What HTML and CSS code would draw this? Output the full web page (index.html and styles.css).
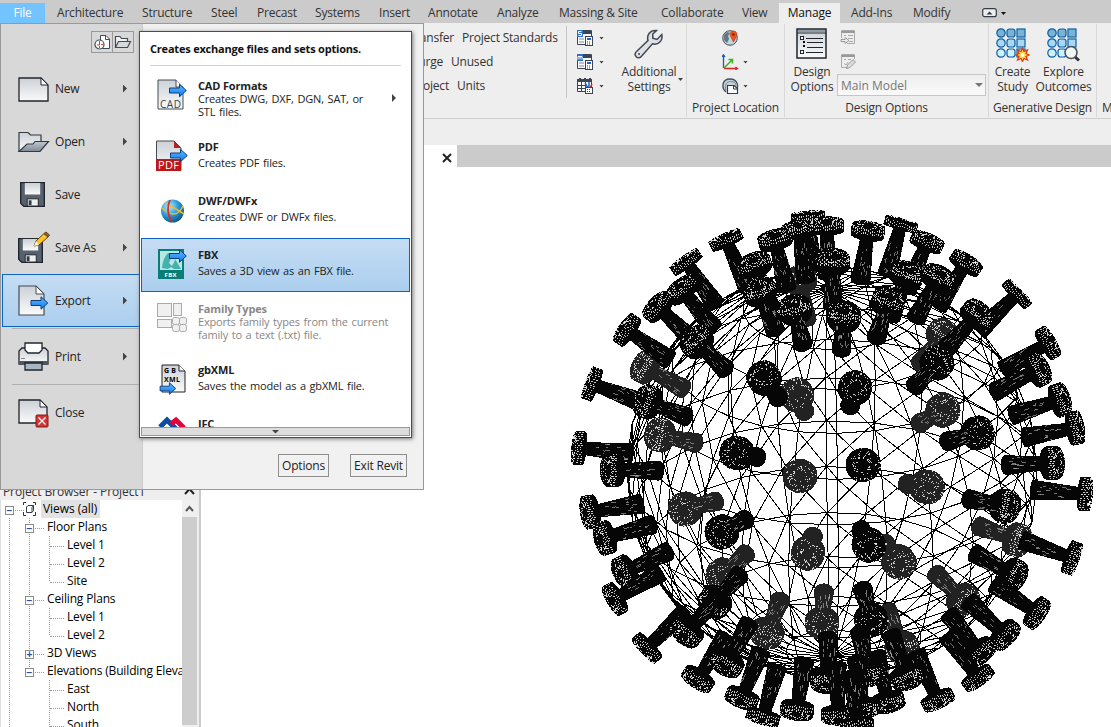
FILE: index.html
```html
<!DOCTYPE html>
<html lang="en">
<head>
<meta charset="utf-8">
<title>Revit</title>
<link rel="stylesheet" href="styles.css">
</head>
<body>
<svg width="0" height="0" class="defs">
  <defs>
    <linearGradient id="paper" x1="0" y1="0" x2="0" y2="1"><stop offset="0" stop-color="#ccd1d7"/><stop offset="1" stop-color="#fafafa"/></linearGradient>
    <linearGradient id="blue" x1="0" y1="0" x2="0" y2="1"><stop offset="0" stop-color="#65b8ff"/><stop offset="1" stop-color="#0a7cf0"/></linearGradient>
    <linearGradient id="steel" x1="0" y1="0" x2="0" y2="1"><stop offset="0" stop-color="#c3c9cf"/><stop offset="1" stop-color="#7e8a96"/></linearGradient>
    <radialGradient id="globe" cx=".35" cy=".3" r=".8"><stop offset="0" stop-color="#b8ecff"/><stop offset=".5" stop-color="#2a9bd8"/><stop offset="1" stop-color="#064a80"/></radialGradient>
    <symbol id="arrow" viewBox="0 0 18 14"><path d="M.5 4.500H10.500V.8L17.300 7L10.500 13.200V9.500H.5Z" fill="url(#blue)" stroke="#0a3f7c"/></symbol>
    <symbol id="floppy" viewBox="0 0 26 26"><path d="M.7.7H25.300V25.300H4L.7 22Z" fill="#58616e" stroke="#20242c" stroke-width="1.400"/><path d="M5 1H21V13H5Z" fill="url(#paper)"/><path d="M7.500 17.500H19V25H7.500Z" fill="#eee" stroke="#20242c"/><path d="M9 19H12V24H9Z" fill="#333944"/></symbol>
    <symbol id="grid9" viewBox="0 0 32 32"><g fill="#7bb3d2" stroke="#0c5fa8" stroke-width="1.200"><circle cx="5" cy="5" r="4.200"/><rect x="11" y="1" width="8" height="8" rx="2.500"/><rect x="21" y="1" width="8" height="8"/></g><g fill="#a9d9ee" stroke="#0c5fa8" stroke-width="1.200"><circle cx="5" cy="15" r="4.200"/><rect x="11" y="11" width="8" height="8" rx="2.500"/><rect x="21" y="11" width="8" height="8"/></g><g fill="#cdf1ff" stroke="#0c5fa8" stroke-width="1.200"><circle cx="5" cy="25" r="4.200"/><rect x="11" y="21" width="8" height="8" rx="2.500"/><rect x="21" y="21" width="8" height="8"/></g></symbol>
    <symbol id="schedule" viewBox="0 0 16 16"><path d="M3 .5H14.500V14.500H.5V7" fill="#f7f8fa" stroke="#3b4452"/><path d="M5 1H14V4H5Z" fill="#3b4452"/><path d="M2 9H7M2 12H7" stroke="#889"/><rect x="8.500" y="6.500" width="7" height="9" fill="#fff" stroke="#3b4452"/><path d="M10 8H14V10H10Z" fill="#1e62c8"/><path d="M10 12H14M10 14H14" stroke="#3b4452" stroke-dasharray="1 1"/><rect width="6" height="7" fill="#2e6fc9"/></symbol>
  </defs>
</svg>
<div class="app">
  <nav class="tabs">
    <span class="tab file">File</span><span class="tab">Architecture</span><span class="tab">Structure</span><span class="tab">Steel</span><span class="tab">Precast</span><span class="tab">Systems</span><span class="tab">Insert</span><span class="tab">Annotate</span><span class="tab">Analyze</span><span class="tab">Massing &amp; Site</span><span class="tab">Collaborate</span><span class="tab">View</span><span class="tab active">Manage</span><span class="tab">Add-Ins</span><span class="tab">Modify</span>
    <svg class="collapse" width="26" height="12" viewBox="0 0 26 12"><rect x=".7" y="1.700" width="13.600" height="8" rx="2" fill="#eee" stroke="#333b48" stroke-width="1.200"/><path d="M4.500 7.500L7.500 4.500L10.500 7.500Z" fill="#333b48"/><path d="M19 5H24L21.500 8Z" fill="#111"/></svg>
  </nav>

  <section class="ribbon">
    <div class="group settings">
      <div class="lines">
        <p><span>Transfer</span>Project Standards</p>
        <p class="w2"><span>Purge</span>Unused</p>
        <p class="w3"><span>Project</span>Units</p>
      </div>
      <div class="stack">
        <p><svg width="16" height="16"><use href="#schedule"/><path d="M4.500 1.500H1.500V3.500H4.500V5.500H1.500" fill="none" stroke="#fff"/></svg><i class="dd"></i></p>
        <p><svg width="16" height="16"><use href="#schedule"/><path d="M1 5.500V2.500H5V5.500M3 2.500V5.500" fill="none" stroke="#fff"/></svg><i class="dd"></i></p>
        <p><svg width="16" height="16"><path d="M.5 1.500H14.500V13.500H.5Z" fill="#f7f8fa" stroke="#3b4452"/><path d="M0 1H15V4H0ZM2 0H4V2H2ZM7 0H9V2H7ZM12 0H14V2H12Z" fill="#3b4452"/><path d="M1 7.500H9M1 10.500H9M4.500 4V13M8.500 4V13" stroke="#3b4452"/><path d="M8 5L11 10M12 4V9" stroke="#1e62c8" stroke-width="1.500"/><path d="M15 6L13 10" stroke="#d22" stroke-width="1.500"/><rect x="8.500" y="9.500" width="7" height="6" fill="#fff" stroke="#3b4452"/><path d="M10 11.500H14M10 13.500H14" stroke="#3b4452" stroke-dasharray="1 1"/></svg><i class="dd"></i></p>
      </div>
      <div class="big additional">
        <svg width="32" height="32" viewBox="0 0 32 32"><path d="M3.200 28.800C1.500 27 1.800 25 3.500 23.500L15 12.500C13.500 7 17 1.800 23.500 2.500L19.800 6V10.200L24 11.500L28.800 6.500C30 12.500 25.500 17.500 19.500 15.800L8.500 28.200C7 30 5 30.500 3.200 28.800Z" fill="#dde0e4" stroke="#414853" stroke-width="1.500"/><circle cx="6" cy="26" r="1" fill="#414853"/></svg>
        <b>Additional<br>Settings</b><i class="dd"></i>
      </div>
    </div>
    <div class="group location">
      <div class="stack">
        <p><svg width="17" height="16"><circle cx="8" cy="8" r="7.300" fill="#c5d3dc" stroke="#454e5a"/><path d="M2 5L5 2L8 3L6 6L7 9L5 13L2 10Z" fill="#617783"/><path d="M11.500 12L8.500 6C7.500 3 9 1 11.500 1S15.500 3 14.500 6Z" fill="#f0531c" stroke="#b8300a" stroke-width=".6"/><circle cx="11.500" cy="4.500" r="1.300" fill="#8c1e00"/></svg></p>
        <p><svg width="17" height="16"><path d="M1.500 14V1M0 3L1.500 .8L3 3" fill="none" stroke="#1a5da8" stroke-width="1.300"/><path d="M2 14.500H15M13.500 13L15.500 14.500L13.500 16" fill="none" stroke="#e02222" stroke-width="1.300"/><path d="M2 14L10 6M6.500 5.500H10.500V9.500" fill="none" stroke="#3bb321" stroke-width="1.500"/></svg><i class="dd"></i></p>
        <p><svg width="17" height="16"><path d="M4 14C-1 10 0 1 8 1S17 9 14 12" fill="#c5d3dc" stroke="#454e5a" stroke-width="1.300"/><path d="M4 12C2 7 5 3.500 8.500 3.500S14 5 14 8" fill="none" stroke="#7d8a94"/><path d="M5.500 15.500V7.500H12L15.500 10.500V15.500Z" fill="#fff" stroke="#333b48" stroke-width="1.200"/><path d="M11.500 8V11H15" fill="none" stroke="#333b48"/></svg><i class="dd"></i></p>
      </div>
      <h3>Project Location</h3>
    </div>
    <div class="group design">
      <div class="row">
        <div class="big">
          <svg width="32" height="32" viewBox="0 0 32 32"><rect x="1" y="1" width="29" height="29" fill="url(#paper)" stroke="#20242c" stroke-width="1.500"/><path d="M2 2H29V4H2Z" fill="#939ba5"/><path d="M1 5H30" stroke="#20242c"/><g fill="#fff" stroke="#20242c"><rect x="4.500" y="8.500" width="3" height="3"/><rect x="4.500" y="22.500" width="3" height="3"/></g><path d="M7 13H9V15H7ZM7 17H9V19H7Z"/><path d="M10 10.500H27M11 14.500H27M11 19.500H27M10 24.500H27" stroke="#20242c" stroke-width="1.200"/></svg>
          <b>Design<br>Options</b>
        </div>
        <div class="design-right">
          <svg width="16" height="16"><path d="M1.500 9V1.500H14.500V14.500H7" fill="none" stroke="#a9a9a9"/><path d="M1.500 3H14.500" stroke="#999" stroke-width="2"/><path d="M4 6.500H6M8 6.500H13M8 9.500H13M9 12.500H13" stroke="#aaa"/><path d="M1 10.500H5V8.500L9 11.500L5 14.500V12.500H1Z" fill="#eee" stroke="#999"/></svg>
          <svg width="16" height="16"><path d="M8 14.500H1.500V1.500H14.500V6" fill="none" stroke="#a9a9a9"/><path d="M1.500 3H14.500" stroke="#999" stroke-width="2"/><path d="M4 6.500H6M8 6.500H11M4 10.500L6 12L8 9" fill="none" stroke="#aaa"/><path d="M6.500 15.500L7.500 12L13 6.500L15.500 9L10 14.500Z" fill="#ddd" stroke="#999"/></svg>
          <div class="combo">Main Model<i class="dd"></i></div>
        </div>
      </div>
      <h3>Design Options</h3>
    </div>
    <div class="group generative">
      <div class="row">
        <div class="big"><svg width="34" height="34" viewBox="0 0 34 34"><use href="#grid9" width="32" height="32"/><path d="M26.500 20L28 23.500L31.500 22L30 25.500L33 27L30 28.500L31.500 32L28 30.500L26.500 33.500L25 30.500L21.500 32L23 28.500L20 27L23 25.500L21.500 22L25 23.500Z" fill="#ffd23c" stroke="#dd3a0c" stroke-width="1.200"/><circle cx="26.500" cy="27" r="2" fill="#fffbe0"/></svg><b>Create<br>Study</b></div>
        <div class="big"><svg width="34" height="34" viewBox="0 0 34 34"><use href="#grid9" width="32" height="32"/><path d="M27 28L32 32.500" stroke="#30333a" stroke-width="3"/><circle cx="24" cy="24.500" r="6" fill="#eef6f4" stroke="#4d5358" stroke-width="1.600"/></svg><b>Explore<br>Outcomes</b></div>
      </div>
      <h3>Generative Design</h3>
    </div>
    <div class="group last"><h3>M</h3></div>
  </section>

  <div class="optionbar"></div>

  <main class="work">
    <aside class="browser">
      <header>Project Browser - Project1<svg width="11" height="8"><path d="M1 7L5.500 2L10 7" fill="none" stroke="#222" stroke-width="2"/></svg></header>
      <div class="treewrap">
        <div class="tree">
          <div class="n root"><i class="c h"><s>−</s></i><svg width="15" height="16" viewBox="0 0 15 16"><path d="M4 1.500H1.500V4M1.500 11V14.500H4M11 1.500H13.500V4M13.500 11V14.500H11" fill="none" stroke="#333"/><path d="M4.500 6L6 4.500H11.500V9.500L10 11.500H4.500ZM10 11V6.500L11.500 4.500" fill="#fff" stroke="#333b48"/></svg><b>Views (all)</b></div>
          <div class="n"><i class="c v"></i><i class="c v h"><s>−</s></i><b>Floor Plans</b></div>
          <div class="n"><i class="c v"></i><i class="c v"></i><i class="c v h"></i><b>Level 1</b></div>
          <div class="n"><i class="c v"></i><i class="c v"></i><i class="c v h"></i><b>Level 2</b></div>
          <div class="n"><i class="c v"></i><i class="c v"></i><i class="c v h end"></i><b>Site</b></div>
          <div class="n"><i class="c v"></i><i class="c v h"><s>−</s></i><b>Ceiling Plans</b></div>
          <div class="n"><i class="c v"></i><i class="c v"></i><i class="c v h"></i><b>Level 1</b></div>
          <div class="n"><i class="c v"></i><i class="c v"></i><i class="c v h end"></i><b>Level 2</b></div>
          <div class="n"><i class="c v"></i><i class="c v h"><s>+</s></i><b>3D Views</b></div>
          <div class="n"><i class="c v"></i><i class="c v h end"><s>−</s></i><b>Elevations (Building Elevation)</b></div>
          <div class="n"><i class="c v"></i><i class="c"></i><i class="c v h"></i><b>East</b></div>
          <div class="n"><i class="c v"></i><i class="c"></i><i class="c v h"></i><b>North</b></div>
          <div class="n"><i class="c v"></i><i class="c"></i><i class="c v h"></i><b>South</b></div>
        </div>
        <div class="scroll"><svg width="15" height="17"><path d="M4 11L7.500 7L11 11" fill="none" stroke="#555" stroke-width="2"/></svg><div class="thumb"></div></div>
      </div>
    </aside>
    <div class="viewport">
      <div class="viewtabs"><div class="viewtab"><svg width="10" height="10"><path d="M1 1L9 9M9 1L1 9" stroke="#222" stroke-width="2"/></svg></div></div>
      <svg id="model" viewBox="200 167 911 560" shape-rendering="crispEdges"></svg>
    </div>
  </main>

  <div class="appmenu">
    <div class="left">
      <div class="quick">
        <span><svg width="17" height="17"><path d="M6.500 1.500H12L15.500 5V14.500H6.500Z" fill="#fff" stroke="#444b55"/><path d="M11.500 2V5.500H15" fill="none" stroke="#444b55"/><circle cx="5.500" cy="10.500" r="4.500" fill="#fff" stroke="#444b55" stroke-width="1.200"/><path d="M5.500 7V11H3M5.500 12V14M7 10.500H9" stroke="#d2421e" fill="none"/></svg></span><span><svg width="18" height="16"><path d="M1.500 13.500V2.500H6L7.500 4.500H13.500V7" fill="#f2f2f2" stroke="#444b55" stroke-width="1.200"/><path d="M1.500 13.500L4.500 7.500H16.500L13.500 13.500Z" fill="#d6dade" stroke="#444b55" stroke-width="1.200"/></svg></span>
      </div>
      <div class="mi"><svg width="32" height="28"><path d="M1 3H23L30 10V26H1Z" fill="url(#paper)" stroke="#20242c" stroke-width="1.300"/><path d="M23 3V10H30Z" fill="#fff" stroke="#20242c"/></svg><b>New</b><i class="ar"></i></div>
      <div class="mi"><svg width="32" height="28"><path d="M1 23V4.500H10L12.500 7H23V14" fill="url(#paper)" stroke="#333942" stroke-width="1.200"/><path d="M1 23.500L9 16H15L17 13.500H30.500L22 23.500Z" fill="url(#steel)" stroke="#333942" stroke-width="1.200"/></svg><b>Open</b><i class="ar"></i></div>
      <div class="mi"><svg width="32" height="28"><use href="#floppy" x="2" y="1" width="25" height="25"/></svg><b>Save</b></div>
      <div class="mi"><svg width="34" height="34"><use href="#floppy" x="0" y="7" width="25" height="25"/><path d="M16 15L18 10L26 2.500L30 6L21 14Z" fill="#f8c32c" stroke="#60431b"/><path d="M26 2.500L28 1L31.500 4L30 6Z" fill="#a95731" stroke="#60431b"/><path d="M16 15L18 10L21 14Z" fill="#fff3d0"/></svg><b>Save As</b><i class="ar"></i></div>
      <div class="mi sel"><svg width="32" height="32"><path d="M1 1H18L26 9V30H1Z" fill="url(#paper)" stroke="#444b55" stroke-width="1.200"/><path d="M18 1V9H26Z" fill="#fff" stroke="#444b55"/><use href="#arrow" x="12" y="11" width="19" height="14"/></svg><b>Export</b><i class="ar"></i></div>
      <hr>
      <div class="mi"><svg width="32" height="32"><path d="M1 10L4 7H27L30 10V23H1Z" fill="url(#paper)" stroke="#20242c" stroke-width="1.300"/><path d="M7 2H24V9L21 12H10L7 9Z" fill="#fff" stroke="#20242c" stroke-width="1.300"/><path d="M1 20H30V24H1Z" fill="#4d5663"/><path d="M7 22H24V29H7Z" fill="#a8b6c3" stroke="#20242c" stroke-width="1.300"/><path d="M3 17.500H7" stroke="#888"/></svg><b>Print</b><i class="ar"></i></div>
      <hr>
      <div class="mi"><svg width="32" height="32"><path d="M1 3H22L29 10V26H1Z" fill="url(#paper)" stroke="#20242c" stroke-width="1.300"/><path d="M22 3V10H29Z" fill="#fff" stroke="#20242c"/><rect x="18" y="18" width="12" height="12" rx="1" fill="#cf3737" stroke="#8c1717"/><path d="M20.500 20.500L27.500 27.500M27.500 20.500L20.500 27.500" stroke="#fff" stroke-width="1.200"/></svg><b>Close</b></div>
    </div>
    <div class="right"><button>Options</button><button>Exit Revit</button></div>
  </div>

  <div class="submenu">
    <h2>Creates exchange files and sets options.</h2>
    <div class="list">
      <div class="it tall"><svg width="32" height="32"><path d="M2 1H20L27 8V30H2Z" fill="url(#paper)" stroke="#444b55"/><path d="M20 1V8H27" fill="#fff" stroke="#444b55"/><use href="#arrow" x="13" y="4" width="18" height="15"/><text x="4" y="28.500" font-size="10" textLength="21" fill="#3a414c">CAD</text></svg><div><b>CAD Formats</b><p>Creates DWG, DXF, DGN, SAT, or<br>STL files.</p></div><i class="ar"></i></div>
      <div class="it"><svg width="32" height="32"><path d="M.5 1H18L25 8V30H.5Z" fill="url(#paper)" stroke="#444b55"/><path d="M18 1V8H25Z" fill="#b62020"/><path d="M0 19H25V31H0Z" fill="#bd1717"/><use href="#arrow" x="14" y="8" width="18" height="15"/><text x="2" y="29" font-size="11" textLength="21" fill="#fff">PDF</text></svg><div><b>PDF</b><p>Creates PDF files.</p></div></div>
      <div class="it"><svg width="32" height="32"><circle cx="16.500" cy="17" r="11.500" fill="url(#globe)"/><path d="M6 14Q20 27 27 12M9 9Q17 13 28 20" fill="none" stroke="#e7b93d" stroke-width="1.500"/><path d="M14 6Q9 17 16 28" fill="none" stroke="#dd2b1c" stroke-width="1.800"/></svg><div><b>DWF/DWFx</b><p>Creates DWF or DWFx files.</p></div></div>
      <div class="it sel"><svg width="32" height="32"><path d="M2 1H28V31H2Z" fill="#087e77"/><path d="M4 3H26V22H4Z" fill="#b9e7e5"/><path d="M6 20Q7 10 12 5H17L13 15L16 18Q19 14 19 11L25 21H18L15 19L12 21Z" fill="#45b1ac"/><use href="#arrow" x="13" y="1" width="18" height="14"/><text x="8.500" y="29" font-size="6" font-weight="700" textLength="12" fill="#fff">FBX</text></svg><div><b>FBX</b><p>Saves a 3D view as an FBX file.</p></div></div>
      <div class="it tall off"><svg width="32" height="32"><g fill="#f0f0f0" stroke="#aaa"><rect x="1.500" y="1.500" width="14" height="13"/><rect x="17.500" y="1.500" width="8" height="12"/><rect x="1.500" y="17.500" width="14" height="8"/><rect x="16.500" y="15.500" width="7" height="7" rx="2"/><rect x="23.500" y="15.500" width="7" height="7" rx="2"/><rect x="16.500" y="22.500" width="7" height="7" rx="2"/><rect x="23.500" y="22.500" width="7" height="7" rx="2"/></g></svg><div><b>Family Types</b><p>Exports family types from the current<br>family to a text (.txt) file.</p></div></div>
      <div class="it"><svg width="32" height="32"><path d="M6 2H23L29 8V29H6Z" fill="url(#paper)" stroke="#222"/><path d="M23 2V8H29" fill="#fff" stroke="#222"/><text x="8" y="10" font-size="7" textLength="12" font-weight="700" fill="#000">GB</text><text x="8" y="19" font-size="7" textLength="16" font-weight="700" fill="#000">XML</text><use href="#arrow" x="3" y="19" width="18" height="13"/></svg><div><b>gbXML</b><p>Saves the model as a gbXML file.</p></div></div>
      <div class="it"><svg width="32" height="32"><path d="M4 10L11 3L20 12" fill="none" stroke="#0b4ea0" stroke-width="5"/><path d="M15 7L20 3L28 11" fill="none" stroke="#e4003c" stroke-width="5"/></svg><div><b>IFC</b></div></div>
    </div>
    <div class="more"><i class="dd"></i></div>
  </div>
</div>
<script src="model.js"></script>
</body>
</html>
```
FILE: styles.css
```css
* { box-sizing: border-box; }
body { margin: 0; font: 12px "Open Sans", "Noto Sans", sans-serif; color: #333; letter-spacing: -0.2px; }
p, h2, h3 { margin: 0; font-weight: 400; font-size: 12px; }
b { font-weight: 400; }
svg { display: block; flex: none; }
svg text { letter-spacing: 0; }
.defs { position: absolute; }
.app { position: relative; width: 1111px; height: 727px; overflow: hidden; background: #fff; display: flex; flex-direction: column; }
.tabs { height: 23px; flex: none; padding-top: 3px; background: #cbcbcb; display: grid; grid-template-columns: 57px 85px 69px 46px 58px 64px 49px 69px 62px 102px 81px 37px 72px 62px 69px 30px; line-height: 20px; white-space: nowrap; }
.tab.file { width: 45px; background: #72c3ff; color: #fff; text-align: center; }
.tab.active { width: 61px; background: #eee; color: #111; text-align: center; }
.collapse { margin-top: 4px; }
.ribbon { height: 96px; flex: none; background: #eee; border-bottom: 1px solid #cfcfcf; display: flex; }
.group { border-right: 1px solid #d8d8d8; margin: 1px 0; display: flex; flex-direction: column; flex: none; }
.group h3 { text-align: center; line-height: 16px; margin-top: auto; padding-bottom: 1px; white-space: nowrap; }
.dd { width: 5px; height: 3px; background: #444; clip-path: polygon(0 0, 100% 0, 50% 100%); flex: none; }
.settings { width: 687px; padding-left: 400px; flex-direction: row; }
.lines { width: 167px; height: 72px; margin-top: 2px; border-right: 1px solid #c4c4c4; }
.lines p { display: flex; gap: 8px; height: 24px; line-height: 24px; white-space: nowrap; }
.lines span { width: 54px; display: flex; justify-content: flex-end; }
.lines .w2 span { width: 43px; }
.lines .w3 span { width: 49px; }
.stack { padding-top: 2px; }
.stack p { display: flex; align-items: center; gap: 6px; height: 24px; }
.settings .stack { padding-left: 10px; width: 53px; }
.big { display: flex; flex-direction: column; align-items: center; text-align: center; line-height: 15px; }
.big b { margin-top: 3px; }
.additional { width: 58px; padding-top: 4px; position: relative; }
.additional b { margin-top: 4px; }
.additional .dd { position: absolute; right: -5px; top: 54px; }
.location { width: 98px; }
.location .stack { padding-left: 35px; }
.location .dd { margin-left: -2px; }
.design { width: 204px; }
.row { display: flex; }
.design .big { width: 52px; padding: 4px 0 0 2px; }
.design .big b, .generative .big b { margin-top: 4px; }
.design-right { display: grid; gap: 8px; padding: 5px 0 0 3px; }
.design-right > .combo { margin: -3px 0 0 -3px; }
.combo { width: 149px; height: 22px; border: 1px solid #c6c6c6; background: linear-gradient(#eee, #fafafa); color: #777; display: flex; align-items: center; justify-content: space-between; padding: 0 2px 0 3px; letter-spacing: 0; }
.combo .dd { width: 8px; height: 4px; background: #777; }
.generative { width: 108px; }
.generative .big { padding-top: 4px; }
.generative .big b { margin-top: 2px; }
.generative .big:nth-child(1) { width: 47px; }
.generative .big:nth-child(2) { width: 55px; }
.last { border: 0; padding-left: 5px; }
.optionbar { height: 26px; flex: none; background: #eee; }
.work { flex: 1; display: flex; min-height: 0; }
.browser { width: 201px; height: 245px; align-self: flex-end; background: #eee; border-right: 2px solid #cacaca; }
.browser header { height: 18px; line-height: 17px; padding: 0 4px 0 3px; display: flex; align-items: center; justify-content: space-between; letter-spacing: -0.1px; }
.treewrap { display: flex; height: 227px; padding-right: 2px; }
.tree { width: 182px; background: #fff; overflow: hidden; border-left: 1px solid #ddd; color: #000; letter-spacing: -0.15px; }
.n { display: flex; height: 18px; line-height: 17px; white-space: nowrap; }
.n b { padding-left: 6px; }
.c { width: 20px; height: 18px; flex: none; position: relative; }
.c.v { background: repeating-linear-gradient(#999 0 1px, transparent 1px 2px) 8px 0 / 1px 100% no-repeat; }
.c.v.end { background-size: 1px 10px; }
.c.h::after { content: ""; display: block; margin: -9px 0 0 9px; width: 14px; border-top: 1px dotted #999; transform: translateY(19px); }
.c s { text-decoration: none; position: absolute; left: 4px; top: 6px; width: 9px; height: 9px; border: 1px solid #8b8b8b; background: #fff; color: #234fa8; font: 700 10px/7px "Liberation Sans", sans-serif; text-align: center; letter-spacing: 0; z-index: 1; }
.root svg { margin: 1px 0 0 1px; }
.root b { margin-left: 4px; padding: 0 3px 0 2px; background: #e2e2e2; letter-spacing: -0.05px; }
.scroll { width: 15px; background: #f0f0f0; }
.thumb { height: 208px; background: #cdcdcd; }
.viewport { flex: 1; display: flex; flex-direction: column; margin-left: -1px; }
.viewtabs { height: 22px; background: #cbcbcb; }
.viewtab { width: 257px; height: 22px; background: #fff; padding: 8px 0 0 242px; }
#model { width: 911px; height: 560px; }
.appmenu { position: absolute; left: 0; top: 23px; width: 424px; height: 467px; border: 1px solid #999; background: #f1f1f1; display: flex; color: #222; }
.left { width: 142px; background: #d8d8d8; border-right: 1px solid #ccc; }
.quick { display: flex; width: 43px; height: 22px; margin: 7px 0 9px 90px; border: 1px solid #999; }
.quick span { flex: 1; display: grid; place-items: center; }
.quick span + span { border-left: 1px solid #999; }
.mi { height: 53px; display: flex; align-items: center; padding-left: 16px; margin-left: 1px; width: 139px; }
.mi svg { width: 37px; overflow: visible; }
.mi.sel { border: 1px solid #0b64c0; background: linear-gradient(#c5dcf3, #abcfef); padding-left: 15px; }
.ar { width: 4px; height: 8px; background: #444; clip-path: polygon(0 0, 100% 50%, 0 100%); margin-left: auto; flex: none; }
.mi .ar { margin-right: 14px; }
.mi.sel .ar { margin-right: 13px; }
.left hr { border: 0; border-top: 1px solid #b0b0b0; margin: 1px 0 1px 11px; }
.right { flex: 1; display: flex; align-items: flex-end; justify-content: flex-end; gap: 21px; padding: 0 16px 12px 0; }
button { height: 23px; border: 1px solid #8e8e8e; background: #f1f1f1; font: inherit; letter-spacing: inherit; color: #222; padding: 0; width: 51px; white-space: nowrap; }
button + button { width: 57px; }
.submenu { position: absolute; left: 139px; top: 31px; width: 273px; height: 407px; border: 1px solid #0b5cb0; background: #fff; box-shadow: 1px 1px 4px #777; padding: 0 1px; color: #222; font-size: 11px; letter-spacing: -0.17px; }
.submenu h2 { font-size: 11px; font-weight: 700; line-height: 33px; margin: 0 9px 3px; border-bottom: 1px solid #d4d4d4; color: #111; height: 34px; white-space: nowrap; letter-spacing: -0.2px; }
.list { height: 358px; overflow: hidden; }
.it { height: 54px; display: flex; padding: 9px 12px 0 14px; border: 1px solid transparent; }
.it.tall { height: 61px; }
.it.sel { border-color: #0b64c0; background: linear-gradient(#c5dcf3, #abcfef); }
.it svg { margin-right: 10px; overflow: visible; }
.it b { display: block; font-weight: 700; line-height: 13px; }
.it p { font-size: 11px; line-height: 13px; padding-top: 3px; white-space: nowrap; word-spacing: 1px; }
.it.tall p { padding-top: 0; }
.it .ar { margin: 15px 1px 0 auto; }
.off { color: #888; }
.more { height: 9px; background: #ddd; border: 1px solid #999; display: grid; place-items: center; }
.more .dd { width: 8px; height: 4px; }
```
FILE: model.js
```js
// Wireframe sphere with spikes, drawn in an orthographic projection.
const svg = document.getElementById('model');
const CX = 832, CY = 473, R = 206, TILT = 0.48;
const out = [];
let seed = 7;
const rnd = () => (seed = (seed * 16807) % 2147483647) / 2147483647;
const f = n => n.toFixed(1);

function point(i, j, rings, segs) {
  const a = Math.PI * i / rings, b = 2 * Math.PI * j / segs + 0.03;
  const x = Math.sin(a) * Math.sin(b), y = Math.cos(a), z = Math.sin(a) * Math.cos(b);
  return f(CX + R * x) + ' ' + f(CY - R * (y * Math.cos(TILT) - z * Math.sin(TILT)));
}
let mesh = '';
const rings = 14, segs = 26;
for (let i = 0; i < rings; i++) {
  for (let j = 0; j < segs; j++) {
    const p = point(i, j, rings, segs), q = point(i + 1, j, rings, segs);
    mesh += 'M' + q + 'L' + p + 'L' + point(i + 1, j + 1, rings, segs) + 'L' + q;
  }
}
out.push(`<path d="${mesh}" fill="none" stroke="#000" stroke-width="1"/>`);

// Head centres of the spikes; far ones are drawn first in a lighter shade.
const far = [[645,367],[660,435],[797,395],[800,280],[943,335],[943,410],[685,509],[800,476],[808,553],[723,575],[767,633],[822,623],[927,487],[1017,540],[899,562],[963,600],[902,647]];
const near = [[808,217],[827,226],[799,230],[775,240],[726,240],[755,265],[760,292],[686,262],[682,290],[658,307],[627,330],[697,342],[592,384],[648,402],[579,448],[613,470],[764,378],[737,453],[833,262],[795,310],[868,231],[901,224],[927,242],[907,275],[888,302],[844,317],[966,263],[938,278],[1017,294],[977,315],[937,363],[1048,343],[1038,370],[1060,400],[1075,428],[855,388],[978,433],[863,465],[1052,463],[590,512],[605,538],[722,532],[625,572],[615,599],[715,602],[647,648],[687,632],[698,679],[727,663],[742,698],[763,717],[797,710],[827,680],[838,715],[1005,506],[1085,494],[1072,558],[869,545],[1013,575],[1037,613],[1005,635],[980,652],[978,678],[871,620],[938,700],[907,677],[888,702],[867,673],[863,708],[857,725]];

function spike([hx, hy], color) {
  const dx = hx - CX, dy = hy - CY, r = Math.hypot(dx, dy);
  const deg = Math.atan2(dy, dx) * 180 / Math.PI;
  const k = Math.sqrt(Math.max(0.003, 1 - (r / 258) ** 2));
  const t = 10 * r / 257, len = r * 0.21;
  let s = `<g transform="translate(${hx} ${hy}) rotate(${f(deg)})"><g fill="${color}">`;
  s += `<path d="M0 -6L${f(-len)} -10V10L0 6Z"/><ellipse cx="${f(-len)}" rx="${f(10 * k)}" ry="10"/>`;
  s += `<path d="M${f(-t / 2)} -17H${f(t / 2)}V17H${f(-t / 2)}Z"/><ellipse cx="${f(-t / 2)}" rx="${f(17 * k)}" ry="17"/><ellipse cx="${f(t / 2)}" rx="${f(17 * k)}" ry="17"/></g>`;
  let d = '';
  for (let i = 0; i < 64; i++) {
    const a = i / 64 * 2 * Math.PI, m = 0.3 + rnd() * 0.65;
    const x = t / 2 + 17 * k * m * Math.cos(a), y = 17 * m * Math.sin(a);
    d += `M${f(x)} ${f(y)}l${f(1.4 * k * Math.cos(a) + 0.3)} ${f(1.4 * Math.sin(a))}`;
  }
  if (t > 6) for (let y = -15; y < 16; y += 2.2) {
    d += `M${f(-t / 2 + rnd() * t * 0.3)} ${f(y)}h1.600m1.600 0h1.600`;
  }
  s += `<path d="${d}" stroke="#fff" stroke-width=".8" fill="none"/>`;
  let e = '';
  if (len > 25) for (let i = 0; i < 16; i++) {
    e += `M${f(-len * (0.35 + rnd() * 0.6))} ${f((rnd() - 0.5) * 15)}h${f(1 + rnd() * 4)}`;
  }
  return s + `<path d="${e}" stroke="#bbb" stroke-width=".6"/></g>`;
}
far.forEach(p => out.push(spike(p, '#222')));
near.forEach(p => out.push(spike(p, '#060606')));
svg.innerHTML = out.join('');
```
